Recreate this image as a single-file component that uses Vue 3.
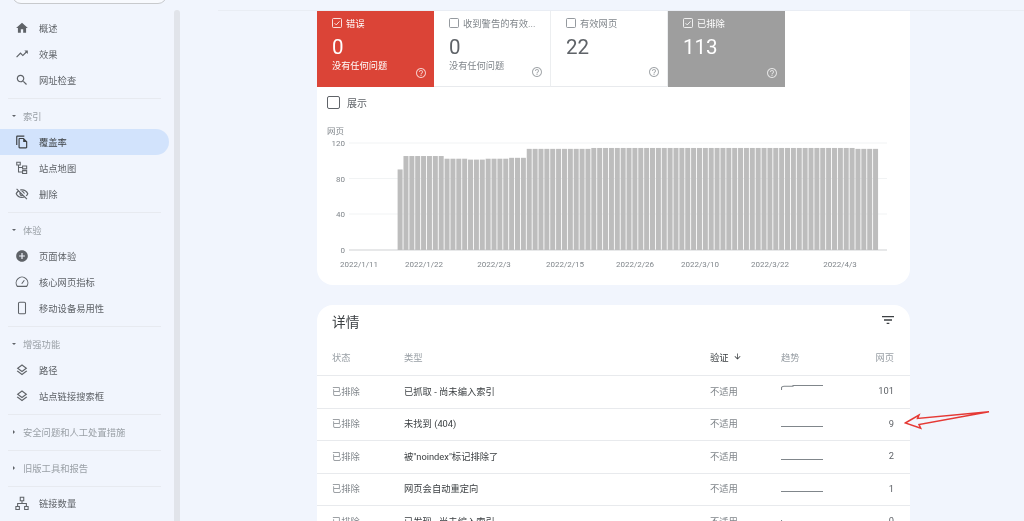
<script setup>
const icons = {
  home: 'M10 20v-6h4v6h5v-8h3L12 3 2 12h3v8z',
  trend: 'M16 6l2.29 2.29-4.88 4.88-4-4L2 16.59 3.41 18l6-6 4 4 6.3-6.29L22 12V6z',
  search: 'M15.5 14h-.79l-.28-.27C15.41 12.59 16 11.11 16 9.5 16 5.91 13.09 3 9.5 3S3 5.91 3 9.5 5.91 16 9.5 16c1.61 0 3.09-.59 4.23-1.57l.27.28v.79l5 4.99L20.49 19l-4.99-5zm-6 0C7.01 14 5 11.99 5 9.5S7.01 5 9.5 5 14 7.01 14 9.5 11.99 14 9.5 14z',
  copy: 'M16 1H4c-1.1 0-2 .9-2 2v14h2V3h12V1zm-1 4H8c-1.1 0-1.99.9-1.99 2L6 21c0 1.1.89 2 1.99 2H19c1.1 0 2-.9 2-2V11l-6-6zM8 21V7h6v5h5v9H8z',
  hide: 'M12 6c3.79 0 7.17 2.13 8.82 5.5-.59 1.22-1.42 2.27-2.41 3.12l1.41 1.41c1.39-1.23 2.49-2.77 3.18-4.53C21.27 7.11 17 4 12 4c-1.27 0-2.49.2-3.64.57l1.65 1.65C10.66 6.09 11.32 6 12 6zm-1.07 1.14L13 9.21c.57.25 1.03.71 1.28 1.28l2.07 2.07c.08-.34.14-.7.14-1.07C16.5 9.01 14.48 7 12 7c-.37 0-.72.05-1.07.14zM2.01 3.87l2.68 2.68C3.06 7.83 1.77 9.53 1 11.5 2.73 15.89 7 19 12 19c1.52 0 2.98-.29 4.32-.82l3.42 3.42 1.41-1.41L3.42 2.45 2.01 3.87zm7.5 7.5l2.61 2.61c-.04.01-.08.02-.12.02-1.38 0-2.5-1.12-2.5-2.5 0-.05.01-.08.01-.13zm-3.4-3.4l1.75 1.75c-.23.55-.36 1.15-.36 1.78 0 2.48 2.02 4.5 4.5 4.5.63 0 1.23-.13 1.77-.36l.98.98c-.88.24-1.8.38-2.75.38-3.79 0-7.17-2.13-8.82-5.5.7-1.43 1.72-2.61 2.93-3.53z',
  add: 'M12 2C6.48 2 2 6.48 2 12s4.48 10 10 10 10-4.48 10-10S17.52 2 12 2zm5 11h-4v4h-2v-4H7v-2h4V7h2v4h4v2z',
  layers: 'M11.99 18.54l-7.37-5.73L3 14.07l9 7 9-7-1.63-1.27-7.38 5.74zM12 16l7.36-5.73L21 9l-9-7-9 7 1.63 1.27L12 16zm0-11.47L17.74 9 12 13.47 6.26 9 12 4.53z',
  sitemap: 'M3 2h6v5H3z M6 7v12h7 M6 11h7 M13 8.5h7v5h-7z M13 16.5h7v5h-7z',
  gauge: 'M4 19.5a10 10 0 1 1 16 0z M11.5 15l4.5-6',
  phone: 'M8 2h8a2 2 0 0 1 2 2v16a2 2 0 0 1-2 2H8a2 2 0 0 1-2-2V4a2 2 0 0 1 2-2z',
  links: 'M9 2h6v6H9z M12 8v5 M4.5 18v-5h15v5 M1.5 18h6v5h-6z M16.5 18h6v5h-6z',
}
const strokeIcons = ['sitemap', 'gauge', 'phone', 'links']
const helpPath = 'M11 18h2v-2h-2v2zm1-16C6.48 2 2 6.48 2 12s4.48 10 10 10 10-4.48 10-10S17.52 2 12 2zm0 18c-4.41 0-8-3.59-8-8s3.59-8 8-8 8 3.59 8 8-3.59 8-8 8zm0-14c-2.21 0-4 1.79-4 4h2c0-1.1.9-2 2-2s2 .9 2 2c0 2-3 1.75-3 5h2c0-2.25 3-2.5 3-5 0-2.21-1.79-4-4-4z'

const sections = [
  { items: [{ icon: 'home', label: '概述' }, { icon: 'trend', label: '效果' }, { icon: 'search', label: '网址检查' }] },
  { title: '索引', open: true, items: [{ icon: 'copy', label: '覆盖率', active: true }, { icon: 'sitemap', label: '站点地图' }, { icon: 'hide', label: '删除' }] },
  { title: '体验', open: true, items: [{ icon: 'add', label: '页面体验' }, { icon: 'gauge', label: '核心网页指标' }, { icon: 'phone', label: '移动设备易用性' }] },
  { title: '增强功能', open: true, items: [{ icon: 'layers', label: '路径' }, { icon: 'layers', label: '站点链接搜索框' }] },
  { title: '安全问题和人工处置措施', items: [] },
  { title: '旧版工具和报告', items: [] },
  { items: [{ icon: 'links', label: '链接数量' }] },
]

const tabs = [
  { label: '错误', value: '0', sub: '没有任何问题', cls: 'red', checked: true },
  { label: '收到警告的有效...', value: '0', sub: '没有任何问题', cls: '', checked: false },
  { label: '有效网页', value: '22', sub: '', cls: '', checked: false },
  { label: '已排除', value: '113', sub: '', cls: 'grey', checked: true },
]

// bar values read off the chart, left to right
const runs = [[90, 1], [105, 7], [102, 4], [101, 3], [102, 4], [103, 3], [113, 11], [114, 45], [113, 4]]
const bars = []
runs.forEach(([v, n]) => {
  for (let i = 0; i < n; i++) {
    const h = v * 0.895
    bars.push({ x: 80.6 + bars.length * 5.87, y: 130 - h, h })
  }
})
const yTicks = [{ v: 120, y: 23 }, { v: 80, y: 58.5 }, { v: 40, y: 94 }, { v: 0, y: 130 }]
const xTicks = [
  { t: '2022/1/11', x: 42 }, { t: '2022/1/22', x: 107 }, { t: '2022/2/3', x: 177 }, { t: '2022/2/15', x: 248 },
  { t: '2022/2/26', x: 318 }, { t: '2022/3/10', x: 383 }, { t: '2022/3/22', x: 453 }, { t: '2022/4/3', x: 523 },
]

const flat = 'M0 10.5H42'
const rows = [
  { type: '已抓取 - 尚未编入索引', pages: 101, spark: 'M0.5 6V3.5Q1 2.2 3 2.2H12V1.5H42' },
  { type: '未找到 (404)', pages: 9, spark: flat },
  { type: '被"noindex"标记排除了', pages: 2, spark: flat },
  { type: '网页会自动重定向', pages: 1, spark: flat },
  { type: '已发现 - 尚未编入索引', pages: 0, spark: 'M0.5 6V8' },
]
</script>

<template>
  <div class="page">
    <aside class="sidebar">
      <div class="nav">
        <div class="search-box"></div>
        <section v-for="(s, i) in sections" :key="i" class="nav-section">
          <div v-if="s.title" class="nav-title">
            <span class="caret" :class="s.open ? 'down' : 'right'"></span>{{ s.title }}
          </div>
          <div v-for="item in s.items" :key="item.label" class="nav-item" :class="{ active: item.active }">
            <svg
              class="nav-icon"
              viewBox="0 0 24 24"
              :class="{ line: strokeIcons.includes(item.icon) }"
            >
              <path :d="icons[item.icon]" />
            </svg>
            <span>{{ item.label }}</span>
          </div>
        </section>
      </div>
      <div class="scrollbar"></div>
    </aside>

    <main class="main">
      <div class="topline"></div>
      <div class="card chart-card">
        <div class="tabs">
          <div v-for="tab in tabs" :key="tab.label" class="tab" :class="tab.cls">
            <div class="tab-label">
              <svg class="check" viewBox="0 0 12 12">
                <rect x="0.6" y="0.6" width="10.8" height="10.8" rx="1.2" />
                <path v-if="tab.checked" d="M3 6.2l2.1 2.1L9 4" />
              </svg>
              <span>{{ tab.label }}</span>
            </div>
            <div class="tab-value">{{ tab.value }}</div>
            <div class="tab-sub">{{ tab.sub }}</div>
            <svg class="help" viewBox="0 0 24 24"><path :d="helpPath" /></svg>
          </div>
        </div>
        <div class="show-row">
          <span class="show-box"></span>
          <span>展示</span>
        </div>
        <svg class="chart" width="593" height="165" viewBox="0 0 593 165">
          <text class="chart-title" x="10" y="14">网页</text>
          <g v-for="t in yTicks" :key="t.v">
            <line class="grid" :class="{ base: t.v === 0 }" x1="32" x2="570" :y1="t.y" :y2="t.y" />
            <text class="tick" x="28" :y="t.y + 3" text-anchor="end">{{ t.v }}</text>
          </g>
          <rect v-for="(b, i) in bars" :key="i" class="bar" :x="b.x" :y="b.y" width="5" :height="b.h" />
          <text v-for="t in xTicks" :key="t.t" class="tick" :x="t.x" y="147" text-anchor="middle">{{ t.t }}</text>
        </svg>
      </div>

      <div class="card details">
        <div class="details-head">
          <span class="details-title">详情</span>
          <svg class="filter" viewBox="0 0 24 24"><path d="M10 18h4v-2h-4v2zM3 6v2h18V6H3zm3 7h12v-2H6v2z" /></svg>
        </div>
        <div class="tr th">
          <span>状态</span>
          <span>类型</span>
          <span class="sorted">验证
            <svg viewBox="0 0 24 24"><path d="M20 12l-1.41-1.41L13 16.17V4h-2v12.17l-5.58-5.59L4 12l8 8 8-8z" /></svg>
          </span>
          <span>趋势</span>
          <span class="num">网页</span>
        </div>
        <div v-for="row in rows" :key="row.type" class="tr">
          <span class="muted">已排除</span>
          <span class="type">{{ row.type }}</span>
          <span class="muted">不适用</span>
          <svg class="spark" width="42" height="14" viewBox="0 0 42 14"><path :d="row.spark" /></svg>
          <span class="num count">{{ row.pages }}</span>
        </div>
      </div>
    </main>

    <svg class="arrow" width="90" height="24" viewBox="0 0 90 24">
      <path d="M1.3 14L15 6L13.5 9.5L85 2.7L15 15.5L16.7 19.3Z" />
    </svg>
  </div>
</template>

<style>
html,
body {
  margin: 0;
  background: #f1f5fd;
}
</style>

<style scoped>
.page {
  position: relative;
  display: flex;
  width: 1024px;
  height: 521px;
  overflow: hidden;
  background: #f1f5fd;
  font-family: Roboto, "Noto Sans CJK SC", sans-serif;
  font-size: 9.3px;
  color: #3c4043;
  filter: blur(0.3px);
}

.sidebar {
  display: flex;
  flex: none;
  width: 180px;
}

.nav {
  width: 174px;
  flex: none;
}

.search-box {
  height: 20px;
  margin: -18px 7px 11px 12px;
  background: #f8fafe;
  border: 1px solid #c8cacd;
  border-radius: 9px;
}

.scrollbar {
  width: 6px;
  margin-top: 10px;
  background: #e1e4ea;
  border-radius: 3px 3px 0 0;
}

.nav-section {
  position: relative;
  padding-bottom: 6px;
}

.nav-section::after {
  content: "";
  position: absolute;
  left: 8px;
  width: 153px;
  bottom: 0;
  height: 1px;
  background: #e7eaf0;
}

.nav-section:last-child {
  padding-top: 3px;
}

.nav-section:last-child::after {
  display: none;
}

.nav-title {
  display: flex;
  align-items: center;
  height: 30px;
  padding-top: 3px;
  padding-left: 12px;
  box-sizing: border-box;
  color: #9aa0a6;
}

.caret {
  width: 0;
  height: 0;
  margin-right: 7px;
}

.caret.down {
  border-left: 2.5px solid transparent;
  border-right: 2.5px solid transparent;
  border-top: 2.5px solid #5f6368;
}

.caret.right {
  margin-left: 1px;
  margin-right: 8px;
  border-top: 2.5px solid transparent;
  border-bottom: 2.5px solid transparent;
  border-left: 2.5px solid #5f6368;
}

.nav-item {
  display: flex;
  align-items: center;
  height: 26px;
  width: 169px;
  box-sizing: border-box;
  padding-left: 15px;
  border-radius: 0 13px 13px 0;
  color: #5f6368;
}

.nav-item.active {
  background: #d2e3fc;
  color: #3c4043;
}

.nav-icon {
  width: 14px;
  height: 14px;
  margin-right: 10px;
  flex: none;
  fill: #5f6368;
}

.nav-item.active .nav-icon {
  fill: #3c4043;
}

.nav-icon.line {
  fill: none;
  stroke: #5f6368;
  stroke-width: 1.8;
}

.main {
  flex: none;
  width: 844px;
  padding-left: 137px;
  box-sizing: border-box;
}

.topline {
  height: 10px;
  margin-left: -99px;
  border-bottom: 1px solid #e9edf4;
}

.card {
  width: 593px;
  background: #fff;
}

.chart-card {
  height: 274px;
  border-radius: 0 0 16px 16px;
}

.tabs {
  display: flex;
  width: 468px;
  height: 76px;
}

.tab {
  position: relative;
  width: 117px;
  box-sizing: border-box;
  padding: 7px 0 0 15px;
  color: #80868b;
  border-right: 1px solid #eceef0;
  border-bottom: 1px solid #e8eaed;
}

.tab.red,
.tab.grey {
  color: #fff;
  border: 0;
}

.tab.red {
  background: #db4437;
}

.tab.grey {
  background: #9e9e9e;
}

.tab-label {
  display: flex;
  align-items: center;
  gap: 4px;
  height: 10px;
}

.check {
  width: 10px;
  height: 10px;
  flex: none;
  fill: none;
  stroke: currentColor;
  stroke-width: 1;
}

.tab-value {
  margin-top: 6px;
  height: 26px;
  font-size: 20.5px;
  line-height: 26px;
  color: #5f6368;
}

.tab.red .tab-value,
.tab.grey .tab-value {
  color: #fff;
}

.tab-sub {
  margin-top: -1px;
  font-size: 9.2px;
  line-height: 14px;
}

.help {
  position: absolute;
  right: 7px;
  bottom: 8px;
  width: 12px;
  height: 12px;
  fill: currentColor;
  opacity: 0.7;
}

.show-row {
  display: flex;
  align-items: center;
  gap: 7px;
  height: 33px;
  padding-left: 10px;
  padding-bottom: 2px;
  box-sizing: border-box;
  font-size: 10px;
  color: #5f6368;
}

.show-box {
  width: 13px;
  height: 13px;
  box-sizing: border-box;
  border: 1.2px solid #5f6368;
  border-radius: 2px;
}

.chart {
  display: block;
}

.chart-title {
  font-size: 8.5px;
  fill: #80868b;
}

.tick {
  font-size: 8px;
  fill: #80868b;
}

.grid {
  stroke: #f1f3f4;
  stroke-width: 1;
}

.grid.base {
  stroke: #d0d2d4;
  stroke-width: 1.2;
}

.bar {
  fill: #bdbdbd;
}

.details {
  height: 300px;
  margin-top: 20px;
  border-radius: 16px 16px 0 0;
}

.details-head {
  display: flex;
  align-items: center;
  justify-content: space-between;
  height: 35px;
  padding: 0 14px 4px 15px;
  box-sizing: border-box;
}

.details-title {
  font-size: 13.7px;
  color: #3c4043;
}

.filter {
  width: 16px;
  height: 16px;
  margin-top: -2px;
  fill: #3c4043;
}

.tr {
  display: grid;
  grid-template-columns: 72px 306px 71px 1fr auto;
  align-items: center;
  height: 32.5px;
  padding: 0 16px 2px 15px;
  box-sizing: border-box;
  border-bottom: 1px solid #e8eaed;
}

.tr.th {
  height: 36px;
  color: #9aa0a6;
}

.sorted {
  display: flex;
  align-items: center;
  gap: 4px;
  color: #3c4043;
}

.sorted svg {
  width: 9px;
  height: 9px;
  fill: #3c4043;
}

.muted {
  color: #80868b;
}

.type {
  color: #3c4043;
}

.num {
  text-align: right;
}

.count {
  color: #5f6368;
}

.spark {
  display: block;
  fill: none;
  stroke: #80868b;
  stroke-width: 1.1;
}

.arrow {
  position: absolute;
  left: 904px;
  top: 409px;
  fill: none;
  stroke: #e53935;
  stroke-width: 1.5;
}
</style>
